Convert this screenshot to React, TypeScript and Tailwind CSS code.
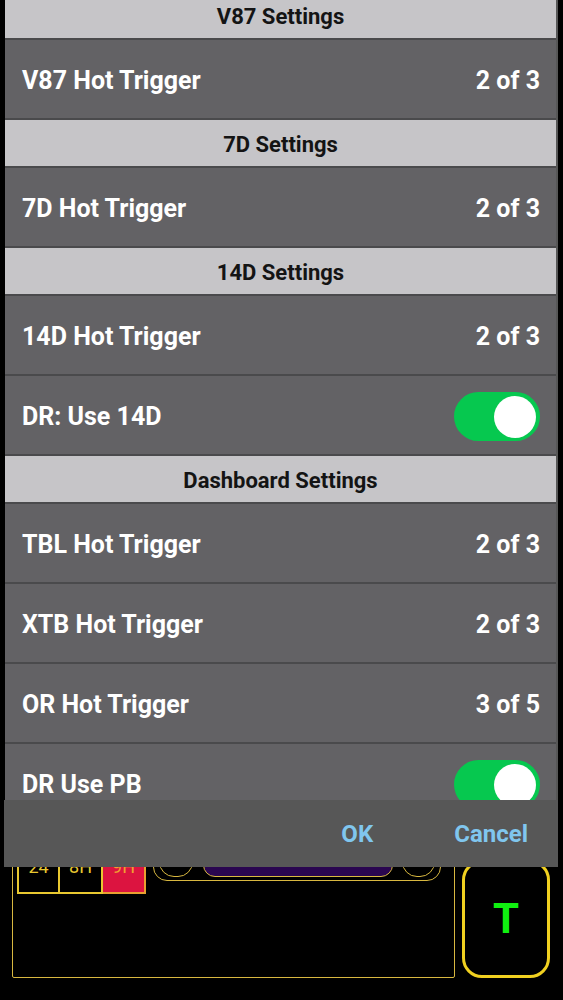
import React from "react";

type Item =
  | { kind: "header"; title: string }
  | { kind: "value"; label: string; value: string }
  | { kind: "toggle"; label: string };

const items: Item[] = [
  { kind: "header", title: "V87 Settings" },
  { kind: "value", label: "V87 Hot Trigger", value: "2 of 3" },
  { kind: "header", title: "7D Settings" },
  { kind: "value", label: "7D Hot Trigger", value: "2 of 3" },
  { kind: "header", title: "14D Settings" },
  { kind: "value", label: "14D Hot Trigger", value: "2 of 3" },
  { kind: "toggle", label: "DR: Use 14D" },
  { kind: "header", title: "Dashboard Settings" },
  { kind: "value", label: "TBL Hot Trigger", value: "2 of 3" },
  { kind: "value", label: "XTB Hot Trigger", value: "2 of 3" },
  { kind: "value", label: "OR Hot Trigger", value: "3 of 5" },
  { kind: "toggle", label: "DR Use PB" },
];

function Toggle() {
  return (
    <div className="w-[86px] h-[49px] rounded-full bg-[#06c84f] flex items-center justify-end pr-[4px]">
      <div className="w-[42px] h-[42px] rounded-full bg-white" />
    </div>
  );
}

function Row({ item }: { item: Item }) {
  if (item.kind === "header") {
    return (
      <div className="h-[48px] shrink-0 border-b-2 border-[#4a4a4c] bg-[#c6c5c8] flex items-center justify-center pt-[2px] text-[22px] font-bold text-[#141414]">
        {item.title}
      </div>
    );
  }
  return (
    <div className="h-[80px] shrink-0 border-b-2 border-[#4a4a4c] bg-[#636265] flex items-center justify-between pl-[17px] pr-[16px] pt-[3px] text-white">
      <span className="text-[25px] font-bold">{item.label}</span>
      {item.kind === "value" ? (
        <span className="text-[25px] font-bold">{item.value}</span>
      ) : (
        <Toggle />
      )}
    </div>
  );
}

export default function App() {
  return (
    <div
      className="relative w-[563px] h-[1000px] bg-black overflow-hidden"
      style={{ fontFamily: "Roboto, 'Noto Sans', sans-serif" }}
    >
      {/* background app */}
      <div className="h-full flex items-end pb-[22px] pl-[12px]">
        <div className="w-[443px] h-[150px] border-[1.5px] border-[#d8b840] rounded-[2px] pt-[18px] pl-[4px] flex items-start gap-[7px]">
          <div className="flex h-[47px]">
            <div className="w-[43px] border-2 border-[#e8c830] flex items-end justify-center text-[18px] text-[#e8c830] leading-none pb-[16px]">24</div>
            <div className="w-[43px] border-2 border-l-0 border-[#e8c830] flex items-end justify-center text-[18px] text-[#e8c830] leading-none pb-[16px]">8H</div>
            <div className="w-[43px] border-2 border-l-0 border-[#e8a030] bg-[#dc1440] flex items-end justify-center text-[18px] text-[#f0a030] leading-none pb-[16px]">9H</div>
          </div>
          <div className="w-[288px] h-[34px] border-[1.5px] border-[#d8b840] rounded-b-[14px] flex items-end justify-between px-[5px] pb-[3px]">
            <div className="w-[34px] h-[30px] rounded-full border-[1.5px] border-[#d8b840]" />
            <div className="w-[190px] h-[24px] rounded-b-[12px] border-[1.5px] border-[#d8b840] bg-[#2a0650]" />
            <div className="w-[33px] h-[30px] rounded-full border-[1.5px] border-[#d8b840]" />
          </div>
        </div>
        <div className="ml-[7px] w-[88px] h-[118px] rounded-[20px] border-[3px] border-[#f0d020] flex items-center justify-center text-[42px] font-bold text-[#10f010] leading-none">
          T
        </div>
      </div>

      {/* dialog */}
      <div className="absolute left-[5px] top-0 w-[553px] bg-[#575757] flex flex-col">
        <div className="h-[800px] overflow-hidden mr-[2px]">
          <div className="flex flex-col -mt-[8px]">
            {items.map((it, i) => (
              <Row key={i} item={it} />
            ))}
          </div>
        </div>
        <div className="h-[67px] -ml-[1px] flex items-center justify-end pr-[30px] gap-[81px] text-[24px] font-bold text-[#80c6ee] bg-[#575757]">
          <span>OK</span>
          <span>Cancel</span>
        </div>
      </div>
    </div>
  );
}
